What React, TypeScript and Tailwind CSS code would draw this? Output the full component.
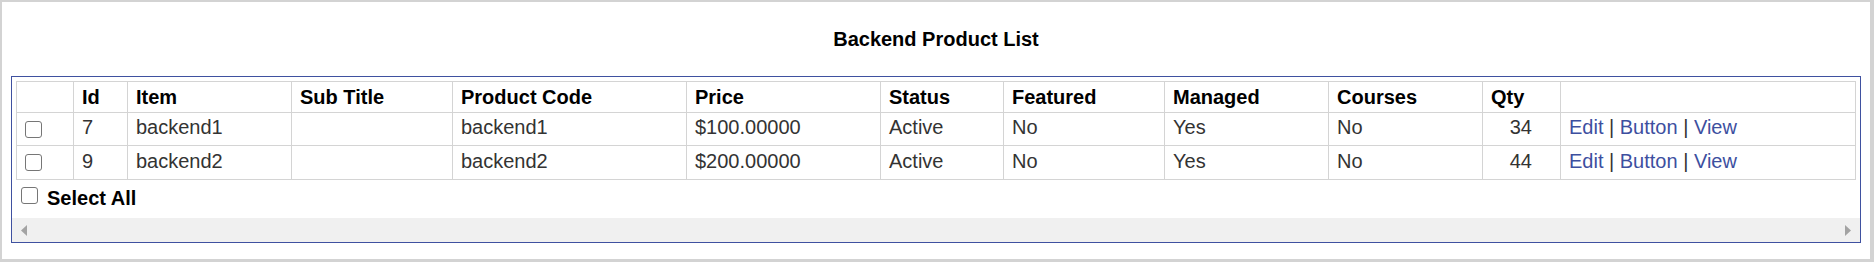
import React from "react";

type Product = {
  id: number;
  item: string;
  subTitle: string;
  code: string;
  price: string;
  status: string;
  featured: string;
  managed: string;
  courses: string;
  qty: number;
};

const products: Product[] = [
  { id: 7, item: "backend1", subTitle: "", code: "backend1", price: "$100.00000", status: "Active", featured: "No", managed: "Yes", courses: "No", qty: 34 },
  { id: 9, item: "backend2", subTitle: "", code: "backend2", price: "$200.00000", status: "Active", featured: "No", managed: "Yes", courses: "No", qty: 44 },
];

const Box = () => (
  <span className="block w-[17px] h-[17px] shrink-0 rounded-[3px] border border-[#767676] bg-white" />
);

const cell = "border border-[#d4d4d4] px-[8px] align-middle";

export default function App() {
  return (
    <div className="w-[1874px] h-[262px] bg-white border-t-2 border-l-2 border-r-4 border-b-[3px] border-[#d3d3d3] font-['Liberation_Sans',Arial,sans-serif] text-[20px] overflow-hidden">
      <h1 className="pt-[26px] h-[49px] text-center font-bold leading-[23px] text-black text-[20px]">
        Backend Product List
      </h1>
      <div className="mt-[25px] mx-[9px] border border-[#3f51a0] h-[167px] flex flex-col">
        <div className="pl-[4px] pt-[4px]">
          <table className="table-fixed border-collapse w-[1839px] text-[#333]">
            <colgroup>
              <col className="w-[57px]" />
              <col className="w-[54px]" />
              <col className="w-[164px]" />
              <col className="w-[161px]" />
              <col className="w-[234px]" />
              <col className="w-[194px]" />
              <col className="w-[123px]" />
              <col className="w-[161px]" />
              <col className="w-[164px]" />
              <col className="w-[154px]" />
              <col className="w-[78px]" />
              <col className="w-[295px]" />
            </colgroup>
            <thead>
              <tr className="h-[31px] text-left text-black font-bold leading-[23px]">
                <th className={cell}></th>
                <th className={cell}>Id</th>
                <th className={cell}>Item</th>
                <th className={cell}>Sub Title</th>
                <th className={cell}>Product Code</th>
                <th className={cell}>Price</th>
                <th className={cell}>Status</th>
                <th className={cell}>Featured</th>
                <th className={cell}>Managed</th>
                <th className={cell}>Courses</th>
                <th className={cell}>Qty</th>
                <th className={cell}></th>
              </tr>
            </thead>
            <tbody className="leading-[23px]">
              {products.map((p, i) => (
                <tr key={p.id} className={i === 0 ? "h-[33px]" : "h-[34px]"}>
                  <td className={cell}>
                    <Box />
                  </td>
                  <td className={`${cell} pb-[3px]`}>{p.id}</td>
                  <td className={`${cell} pb-[3px]`}>{p.item}</td>
                  <td className={`${cell} pb-[3px]`}>{p.subTitle}</td>
                  <td className={`${cell} pb-[3px]`}>{p.code}</td>
                  <td className={`${cell} pb-[3px]`}>{p.price}</td>
                  <td className={`${cell} pb-[3px]`}>{p.status}</td>
                  <td className={`${cell} pb-[3px]`}>{p.featured}</td>
                  <td className={`${cell} pb-[3px]`}>{p.managed}</td>
                  <td className={`${cell} pb-[3px]`}>{p.courses}</td>
                  <td className={`${cell} pb-[3px] text-right pr-[28px]`}>{p.qty}</td>
                  <td className={`${cell} pb-[3px]`}>
                    <a className="text-[#3d4f9f] cursor-pointer">Edit</a>{" | "}
                    <a className="text-[#3d4f9f] cursor-pointer">Button</a>{" | "}
                    <a className="text-[#3d4f9f] cursor-pointer">View</a>
                  </td>
                </tr>
              ))}
            </tbody>
          </table>
          <label className="flex items-start h-[38px] pt-[7px] pl-[5px] gap-[9px] text-black font-bold leading-[22px]">
            <Box />
            <span>Select All</span>
          </label>
        </div>
        <div className="mt-auto h-[24px] bg-[#f0f0f0] flex items-center justify-between px-[9px]">
          <svg width="6" height="11" viewBox="0 0 6 11">
            <polygon points="6,0 6,11 0,5.5" fill="#a3a3a3" />
          </svg>
          <svg width="6" height="11" viewBox="0 0 6 11">
            <polygon points="0,0 0,11 6,5.5" fill="#a3a3a3" />
          </svg>
        </div>
      </div>
    </div>
  );
}
